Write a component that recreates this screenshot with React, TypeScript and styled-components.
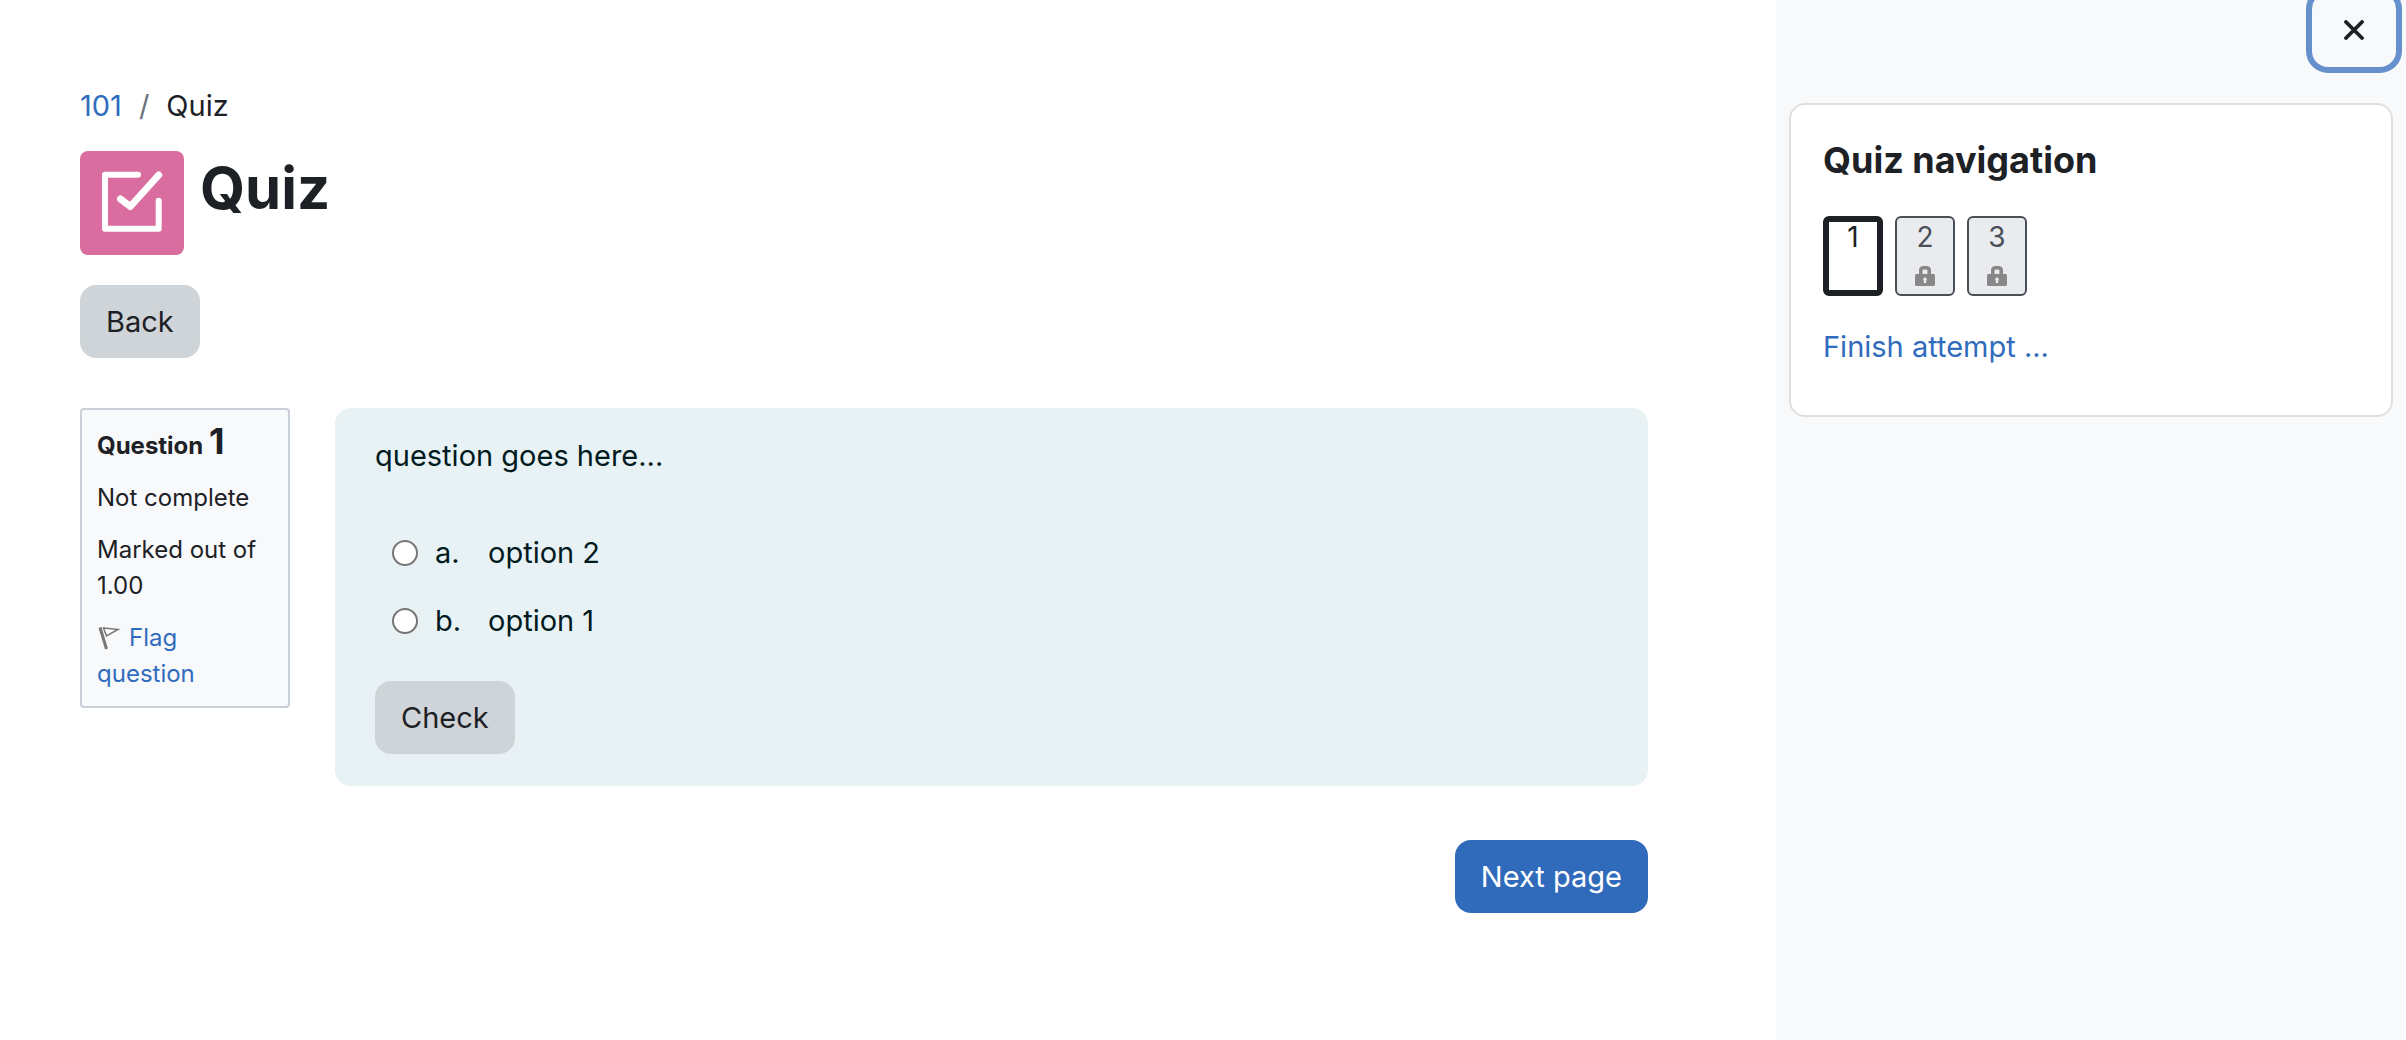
import React from 'react';
import styled, { createGlobalStyle, css } from 'styled-components';

const GlobalStyle = createGlobalStyle`
  *, *::before, *::after { box-sizing: border-box; }
  body {
    margin: 0;
    background: #fff;
    color: #1d2125;
    font-family: Inter, "Liberation Sans", sans-serif;
    font-size: 29px;
    line-height: 44px;
  }
`;

const Page = styled.div`
  display: flex;
  min-height: 100vh;
`;

const Main = styled.main`
  flex: 1;
  min-width: 0;
  padding: 84px 128px 80px 80px;
`;

const Link = styled.a`
  color: #306cbd;
  text-decoration: none;
  &:hover { text-decoration: underline; }
`;

const Crumbs = styled.ol`
  display: flex;
  gap: 17px;
  margin: 0;
  padding: 0;
  list-style: none;
`;

const Crumb = styled.li`
  display: flex;
  gap: 17px;
  & + &::before {
    content: "/";
    color: #6a737b;
  }
`;

const Heading = styled.header`
  display: flex;
  gap: 16px;
  margin-top: 23px;
`;

const ActivityIcon = styled.span`
  display: flex;
  width: 104px;
  height: 104px;
  border-radius: 8px;
  background: #da6d9f;
`;

const Title = styled.h1`
  margin: 0;
  font-size: 58px;
  font-weight: 700;
  line-height: 74px;
`;

const Button = styled.button<{ $primary?: boolean }>`
  height: 73px;
  padding: 0 26px;
  border: 0;
  border-radius: 16px;
  background: #cfd4d8;
  color: #1d2125;
  font: inherit;
  cursor: pointer;
  ${(p) => p.$primary && css`
    background: #306aba;
    color: #fff;
  `}
`;

const BackRow = styled.div`
  display: flex;
  margin-top: 30px;
`;

const Question = styled.section`
  display: flex;
  align-items: flex-start;
  gap: 45px;
  margin-top: 50px;
`;

const Info = styled.div`
  flex: none;
  width: 210px;
  padding: 14px 15px;
  border: 2px solid #cad0d7;
  border-radius: 4px;
  background: #f8f9fb;
  font-size: 24px;
  line-height: 36px;
`;

const InfoTitle = styled.h2`
  margin: 0 0 12px;
  font-size: 24px;
  font-weight: 700;
  line-height: 44px;
`;

const Number = styled.span`
  font-size: 36px;
  line-height: 0;
`;

const InfoLine = styled.p`
  margin: 0;
  & + & { margin-top: 16px; }
`;

const FlagIcon = styled.svg`
  width: 24px;
  height: 24px;
  margin-right: 8px;
  vertical-align: -4px;
`;

const Formulation = styled.form`
  flex: 1;
  min-width: 0;
  padding: 26px 40px 32px;
  border-radius: 16px;
  background: #e8f2f5;
  color: #001a1e;
`;

const Prompt = styled.p`
  margin: 0;
`;

const Answers = styled.fieldset`
  display: grid;
  gap: 24px;
  margin: 53px 0 38px;
  padding: 0 0 0 17px;
  border: 0;
`;

const Answer = styled.label`
  display: grid;
  grid-template-columns: 26px 36px 1fr;
  column-gap: 17px;
  align-items: center;
`;

const Radio = styled.input`
  appearance: none;
  width: 26px;
  height: 26px;
  margin: 0;
  border: 2px solid #767676;
  border-radius: 50%;
  background: #fff;
  &:checked { box-shadow: inset 0 0 0 4px #fff; background: #306cbd; }
`;

const NextRow = styled.div`
  display: flex;
  justify-content: flex-end;
  margin-top: 54px;
`;

const Drawer = styled.aside`
  flex: none;
  width: 630px;
  padding: 0 13px;
  background: #f8f9fb;
`;

const DrawerHeader = styled.div`
  display: flex;
  justify-content: flex-end;
  height: 103px;
  margin-right: -3px;
`;

const Close = styled.button`
  display: flex;
  align-items: center;
  justify-content: center;
  width: 84px;
  height: 74px;
  margin-top: -7px;
  border: 0;
  border-radius: 16px;
  background: transparent;
  box-shadow: 0 0 0 6px #6690cc;
  cursor: pointer;
`;

const Card = styled.section`
  padding: 32px 32px 46px;
  border: 2px solid #dfdfdf;
  border-radius: 16px;
  background: #fff;
`;

const CardTitle = styled.h2`
  margin: 0 0 32px;
  font-size: 36px;
  font-weight: 700;
  line-height: 47px;
`;

const NavButtons = styled.nav`
  display: flex;
  gap: 12px;
  margin-bottom: 29px;
`;

const NavButton = styled.a<{ $current?: boolean }>`
  display: flex;
  flex-direction: column;
  align-items: center;
  justify-content: space-between;
  width: 60px;
  height: 80px;
  padding: 2px 0 8px;
  border: 2px solid #495057;
  border-radius: 6px;
  background: #e9ebef;
  color: #495057;
  font-size: 28px;
  line-height: 34px;
  text-decoration: none;
  ${(p) => p.$current && css`
    padding: 0;
    border: 6px solid #1d2125;
    background: #fff;
    color: #1d2125;
    line-height: 30px;
  `}
`;

const LockIcon = () => (
  <svg width="20" height="20" viewBox="0 0 20 20" aria-hidden="true">
    <path d="M5.800 10V4.600Q5.800 1.800 8.600 1.800H11.400Q14.200 1.800 14.200 4.600V10" fill="none" stroke="#888" strokeWidth="3.600" />
    <rect y="8" width="20" height="12" rx="1.600" fill="#888" />
    <path d="M10 11.500a1.900 1.900 0 0 1 1.200 3.300V17H8.800v-2.200A1.900 1.900 0 0 1 10 11.500z" fill="#e9ebef" />
  </svg>
);

const options = [
  { key: 'a.', text: 'option 2' },
  { key: 'b.', text: 'option 1' },
];

const pages = [
  { n: 1, current: true },
  { n: 2, current: false },
  { n: 3, current: false },
];

export default function App() {
  return (
    <>
      <GlobalStyle />
      <Page>
        <Main>
          <nav aria-label="Breadcrumb">
            <Crumbs>
              <Crumb><Link href="#course">101</Link></Crumb>
              <Crumb>Quiz</Crumb>
            </Crumbs>
          </nav>
          <Heading>
            <ActivityIcon>
              <svg width="104" height="104" viewBox="0 0 104 104" aria-hidden="true">
                <g fill="none" stroke="#fff" strokeLinecap="round" strokeLinejoin="round">
                  <path d="M58 23.700H25V77.700H78.700V49.700" strokeWidth="6" />
                  <path d="M40.500 48L50.300 55.500L78.700 24" strokeWidth="7" />
                </g>
              </svg>
            </ActivityIcon>
            <Title>Quiz</Title>
          </Heading>
          <BackRow><Button type="button">Back</Button></BackRow>
          <Question>
            <Info>
              <InfoTitle>Question <Number>1</Number></InfoTitle>
              <InfoLine>Not complete</InfoLine>
              <InfoLine>Marked out of 1.00</InfoLine>
              <InfoLine>
                <Link href="#flag">
                  <FlagIcon viewBox="0 0 24 24" aria-hidden="true">
                    <path d="M3 1.500L9.500 23" stroke="#777" strokeWidth="3" fill="none" />
                    <path d="M6.500 2L21 3.500L9.500 10Z" stroke="#777" strokeWidth="1.500" fill="#fff" />
                  </FlagIcon>
                  Flag question
                </Link>
              </InfoLine>
            </Info>
            <Formulation>
              <Prompt>question goes here...</Prompt>
              <Answers aria-label="Answer">
                {options.map((o) => (
                  <Answer key={o.key}>
                    <Radio type="radio" name="answer" value={o.key} />
                    <span>{o.key}</span>
                    <span>{o.text}</span>
                  </Answer>
                ))}
              </Answers>
              <Button type="button">Check</Button>
            </Formulation>
          </Question>
          <NextRow><Button type="button" $primary>Next page</Button></NextRow>
        </Main>
        <Drawer>
          <DrawerHeader>
            <Close type="button" aria-label="Close block drawer">
              <svg width="20" height="20" viewBox="0 0 20 20" aria-hidden="true">
                <path d="M2 2L18 18M18 2L2 18" stroke="#1d2125" strokeWidth="3.800" strokeLinecap="round" />
              </svg>
            </Close>
          </DrawerHeader>
          <Card>
            <CardTitle>Quiz navigation</CardTitle>
            <NavButtons aria-label="Questions">
              {pages.map((p) => (
                <NavButton key={p.n} href={`#question-${p.n}`} $current={p.current}>
                  {p.n}
                  {!p.current && <LockIcon />}
                </NavButton>
              ))}
            </NavButtons>
            <Link href="#finish">Finish attempt ...</Link>
          </Card>
        </Drawer>
      </Page>
    </>
  );
}
